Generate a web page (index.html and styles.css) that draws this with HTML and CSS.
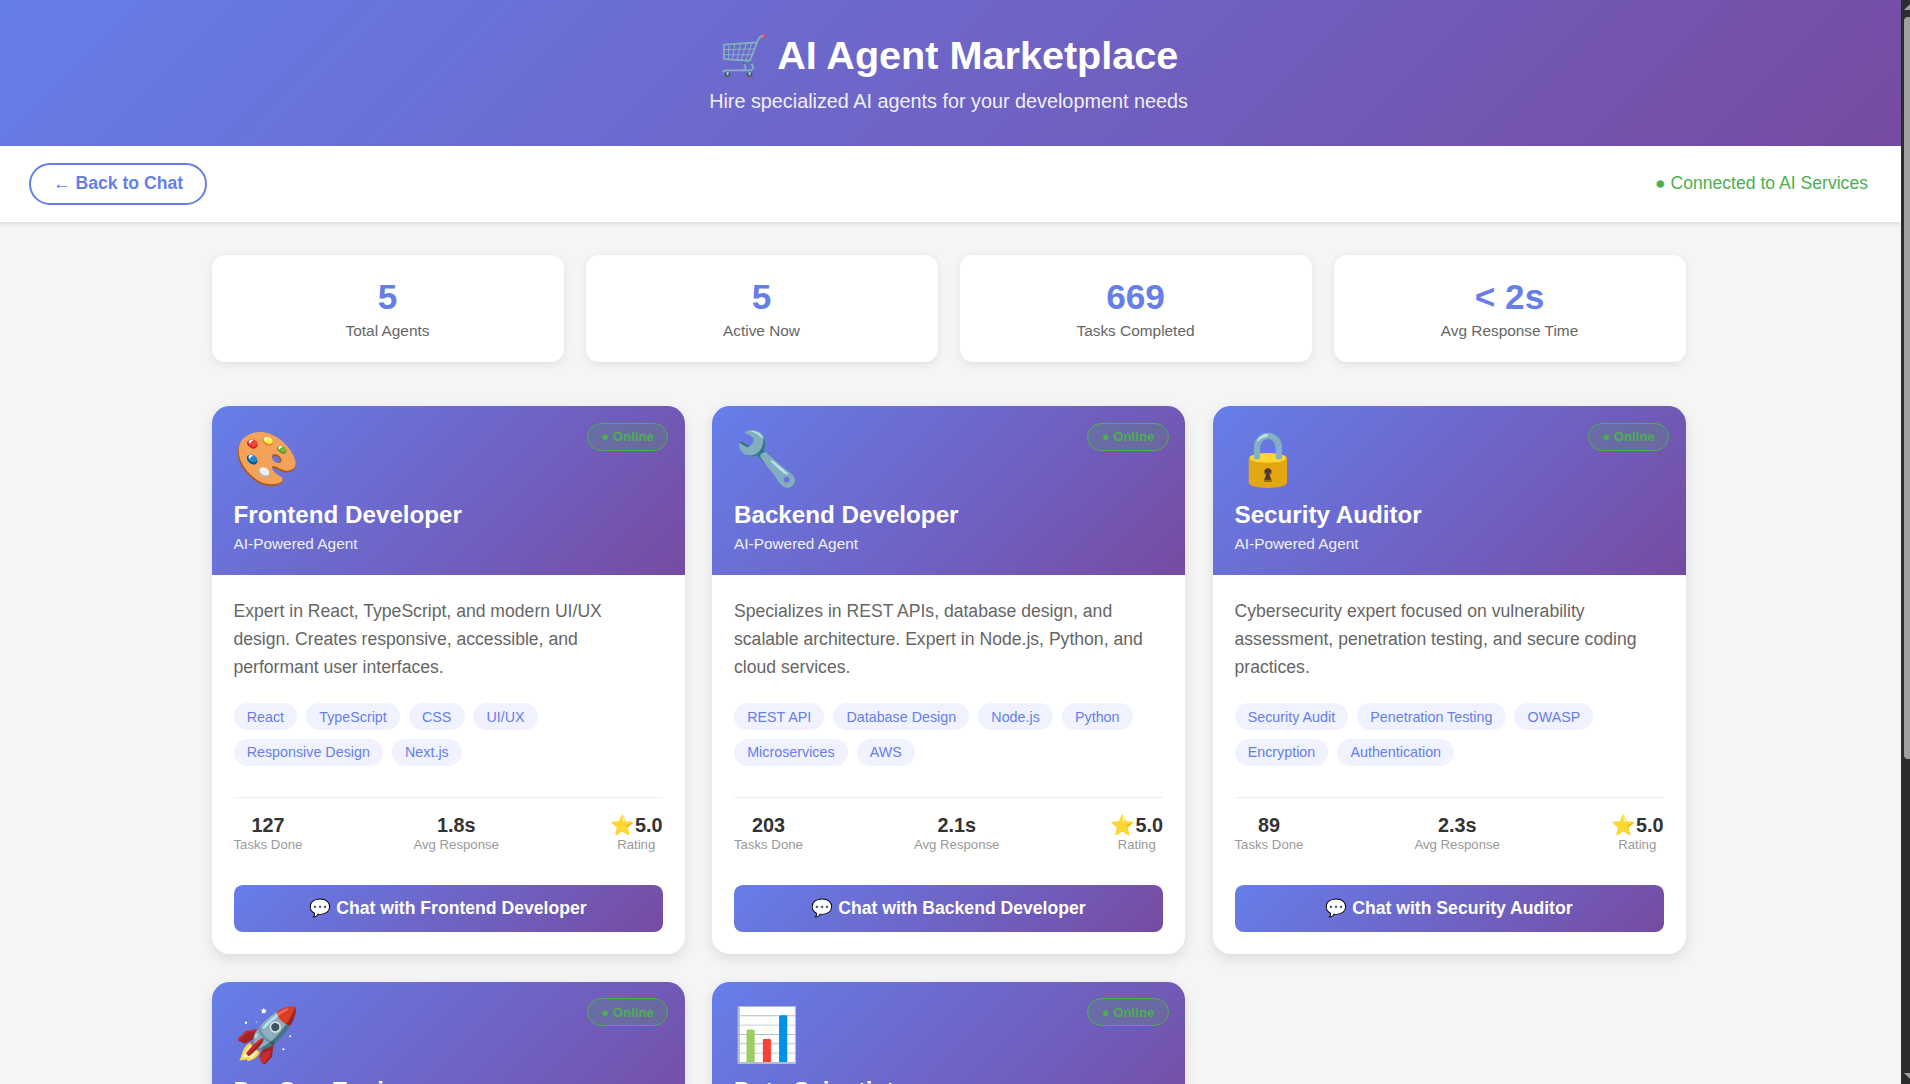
FILE: index.html
```html
<!DOCTYPE html>
<html lang="en">
<head>
<meta charset="utf-8">
<title>AI Agent Marketplace</title>
<link rel="stylesheet" href="styles.css">
</head>
<body>
<div class="page">
  <header class="header">
    <h1>🛒 AI Agent Marketplace</h1>
    <p>Hire specialized AI agents for your development needs</p>
  </header>
  <nav class="nav">
    <a class="back">← Back to Chat</a>
    <div class="connection">● Connected to AI Services</div>
  </nav>
  <main class="container">
    <section class="stats">
      <div class="stat"><div class="stat-number">5</div><div class="stat-label">Total Agents</div></div>
      <div class="stat"><div class="stat-number">5</div><div class="stat-label">Active Now</div></div>
      <div class="stat"><div class="stat-number">669</div><div class="stat-label">Tasks Completed</div></div>
      <div class="stat"><div class="stat-number">&lt; 2s</div><div class="stat-label">Avg Response Time</div></div>
    </section>
    <section class="agents">
      <article class="card">
        <div class="card-header">
          <span class="badge">● Online</span>
          <div class="avatar">🎨</div>
          <h2 class="name">Frontend Developer</h2>
          <div class="role">AI-Powered Agent</div>
        </div>
        <div class="card-body">
          <p class="description">Expert in React, TypeScript, and modern UI/UX design. Creates responsive, accessible, and performant user interfaces.</p>
          <div class="skills"><span class="skill">React</span><span class="skill">TypeScript</span><span class="skill">CSS</span><span class="skill">UI/UX</span><span class="skill">Responsive Design</span><span class="skill">Next.js</span></div>
          <div class="metrics">
            <div class="metric"><div class="value">127</div><div class="label">Tasks Done</div></div>
            <div class="metric"><div class="value">1.8s</div><div class="label">Avg Response</div></div>
            <div class="metric"><div class="value">⭐5.0</div><div class="label">Rating</div></div>
          </div>
          <button class="chat">💬 Chat with Frontend Developer</button>
        </div>
      </article>
      <article class="card">
        <div class="card-header">
          <span class="badge">● Online</span>
          <div class="avatar">🔧</div>
          <h2 class="name">Backend Developer</h2>
          <div class="role">AI-Powered Agent</div>
        </div>
        <div class="card-body">
          <p class="description">Specializes in REST APIs, database design, and scalable architecture. Expert in Node.js, Python, and cloud services.</p>
          <div class="skills"><span class="skill">REST API</span><span class="skill">Database Design</span><span class="skill">Node.js</span><span class="skill">Python</span><span class="skill">Microservices</span><span class="skill">AWS</span></div>
          <div class="metrics">
            <div class="metric"><div class="value">203</div><div class="label">Tasks Done</div></div>
            <div class="metric"><div class="value">2.1s</div><div class="label">Avg Response</div></div>
            <div class="metric"><div class="value">⭐5.0</div><div class="label">Rating</div></div>
          </div>
          <button class="chat">💬 Chat with Backend Developer</button>
        </div>
      </article>
      <article class="card">
        <div class="card-header">
          <span class="badge">● Online</span>
          <div class="avatar">🔒</div>
          <h2 class="name">Security Auditor</h2>
          <div class="role">AI-Powered Agent</div>
        </div>
        <div class="card-body">
          <p class="description">Cybersecurity expert focused on vulnerability assessment, penetration testing, and secure coding practices.</p>
          <div class="skills"><span class="skill">Security Audit</span><span class="skill">Penetration Testing</span><span class="skill">OWASP</span><span class="skill">Encryption</span><span class="skill">Authentication</span></div>
          <div class="metrics">
            <div class="metric"><div class="value">89</div><div class="label">Tasks Done</div></div>
            <div class="metric"><div class="value">2.3s</div><div class="label">Avg Response</div></div>
            <div class="metric"><div class="value">⭐5.0</div><div class="label">Rating</div></div>
          </div>
          <button class="chat">💬 Chat with Security Auditor</button>
        </div>
      </article>
      <article class="card">
        <div class="card-header">
          <span class="badge">● Online</span>
          <div class="avatar">🚀</div>
          <h2 class="name">DevOps Engineer</h2>
          <div class="role">AI-Powered Agent</div>
        </div>
      </article>
      <article class="card">
        <div class="card-header">
          <span class="badge">● Online</span>
          <div class="avatar">📊</div>
          <h2 class="name">Data Scientist</h2>
          <div class="role">AI-Powered Agent</div>
        </div>
      </article>
    </section>
  </main>
</div>
<div class="scrollbar">
  <svg class="arrow" width="9" height="17" viewBox="0 0 9 17"><path d="M3 10L8.5 4.5L14 10Z"/></svg>
  <div class="thumb"></div>
  <svg class="arrow" width="9" height="17" viewBox="0 0 9 17"><path d="M3 6L8.5 11.5L14 6Z"/></svg>
</div>
</body>
</html>
```
FILE: styles.css
```css
* {
  margin: 0;
  padding: 0;
  box-sizing: border-box;
}

body {
  display: flow-root;
  height: 1084px;
  overflow: hidden;
  background: #f5f5f5;
  font-family: "Liberation Sans", Arial, sans-serif;
}

.page {
  zoom: 1.1;
  width: calc(1905px / 1.1);
  margin-top: calc(-1px / 1.1);
  margin-left: calc(-4px / 1.1);
}

.header {
  padding: 30px;
  background: linear-gradient(135deg, #667eea 0%, #764ba2 100%);
  color: white;
  text-align: center;
}

.header h1 {
  margin-bottom: 10px;
  font-size: 36px;
}

.header p {
  font-size: 18px;
  opacity: 0.9;
}

.nav {
  display: flex;
  justify-content: space-between;
  align-items: center;
  padding: 15px 30px;
  background: white;
  box-shadow: 0 2px 4px rgba(0, 0, 0, 0.1);
}

.back {
  padding: 8px 20px;
  border: 2px solid #667eea;
  border-radius: 20px;
  color: #667eea;
  font-weight: 600;
}

.connection {
  color: #4caf50;
}

.container {
  max-width: 1400px;
  margin: 0 auto;
  padding: 30px;
}

.stats {
  display: grid;
  grid-template-columns: repeat(4, 1fr);
  gap: 20px;
  margin-bottom: 40px;
}

.stat {
  padding: 20px;
  border-radius: 12px;
  background: white;
  box-shadow: 0 2px 8px rgba(0, 0, 0, 0.08);
  text-align: center;
}

.stat-number {
  color: #667eea;
  font-size: 32px;
  font-weight: bold;
}

.stat-label {
  margin-top: 5px;
  color: #666;
  font-size: 14px;
}

.agents {
  display: grid;
  grid-template-columns: repeat(3, 1fr);
  gap: 25px;
}

.card {
  overflow: hidden;
  border-radius: 16px;
  background: white;
  box-shadow: 0 4px 12px rgba(0, 0, 0, 0.1);
}

.card-header {
  position: relative;
  padding: 20px;
  background: linear-gradient(135deg, #667eea 0%, #764ba2 100%);
  color: white;
}

.badge {
  position: absolute;
  top: 15px;
  right: 15px;
  padding: 5px 12px;
  border: 1px solid #4caf50;
  border-radius: 20px;
  background: rgba(76, 175, 80, 0.2);
  color: #4caf50;
  font-size: 12px;
  font-weight: 600;
}

.avatar {
  margin-bottom: 10px;
  font-size: 48px;
}

.name {
  margin-bottom: 5px;
  font-size: 22px;
}

.role {
  font-size: 14px;
  opacity: 0.9;
}

.card-body {
  padding: 20px;
}

.description {
  margin-bottom: 20px;
  color: #666;
  line-height: 1.6;
}

.skills {
  display: flex;
  flex-wrap: wrap;
  gap: 8px;
  margin-bottom: 28px;
}

.skill {
  padding: 5px 12px;
  border-radius: 15px;
  background: #f0f2ff;
  color: #667eea;
  font-size: 13px;
}

.metrics {
  display: flex;
  justify-content: space-between;
  margin-bottom: 15px;
  padding: 15px 0;
  border-top: 1px solid #eee;
}

.metric {
  text-align: center;
}

.value {
  color: #333;
  font-size: 18px;
  font-weight: bold;
}

.label {
  color: #999;
  font-size: 12px;
}

.chat {
  width: 100%;
  padding: 12px;
  border: none;
  border-radius: 8px;
  background: linear-gradient(135deg, #667eea 0%, #764ba2 100%);
  color: white;
  font-family: inherit;
  font-size: 16px;
  font-weight: 600;
}

/* Window scrollbar, cut by the right edge of the viewport */
.scrollbar {
  position: fixed;
  top: 0;
  right: 0;
  display: flex;
  flex-direction: column;
  width: 9px;
  height: 1084px;
  background: #2c2c2c;
}

.thumb {
  height: 742px;
  margin: 0 0 auto 3px;
  border-radius: 4px 0 0 4px;
  background: #9f9f9f;
}

.arrow {
  display: block;
  flex: none;
  fill: #9f9f9f;
}
```
